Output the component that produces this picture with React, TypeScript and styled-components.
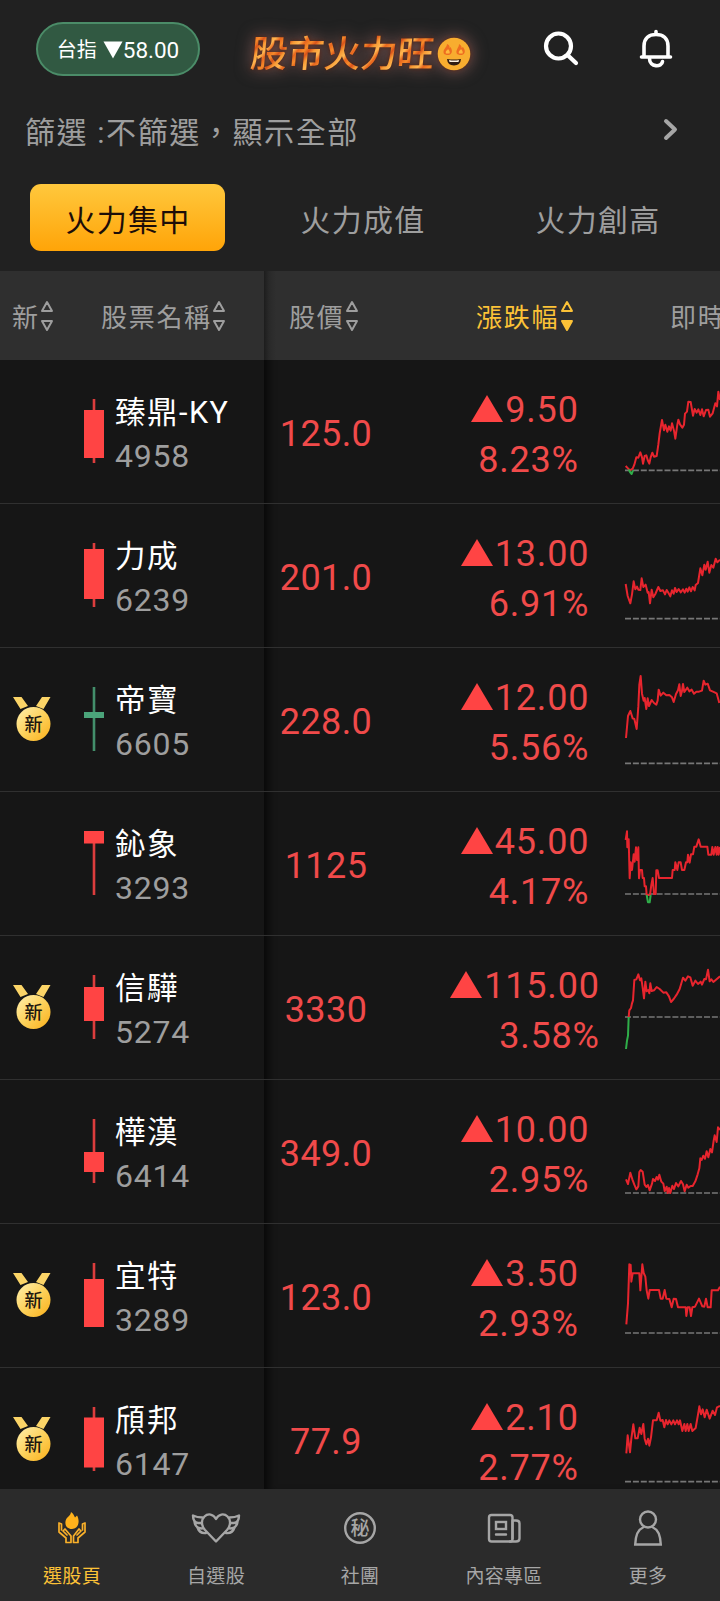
import React from "react";
import styled, { createGlobalStyle } from "styled-components";

const GlobalStyle = createGlobalStyle`
  * { box-sizing: border-box; }
  body {
    margin: 0;
    background: #161616;
    font-family: Roboto, "Noto Sans CJK TC", sans-serif;
  }
`;

const RED = "#ff4444";
const GREEN = "#4ba47a";

const Page = styled.div`
  width: 720px;
  height: 1601px;
  overflow: hidden;
  display: flex;
  flex-direction: column;
  background: #161616;
`;

const Header = styled.header`
  flex: none;
  height: 271px;
  background: #212121;
`;

const TopBar = styled.div`
  display: flex;
  align-items: center;
  height: 98px;
  padding: 0 46px 0 36px;
`;

const IndexPill = styled.button`
  display: flex;
  align-items: center;
  justify-content: center;
  width: 164px;
  height: 54px;
  padding: 2px 0 0;
  border: 2px solid #4b8c68;
  border-radius: 27px;
  background: #315942;
  color: #fff;
  font: 22.5px/1 Roboto, "Noto Sans CJK TC", sans-serif;
`;

const PillLabel = styled.span`
  font-size: 20px;
  margin-right: 6px;
`;

const Brand = styled.div`
  display: flex;
  align-items: center;
  margin-left: 46px;
  padding: 4px 0 0 2px;
  filter: drop-shadow(0 0 2px rgba(90, 30, 10, 0.8)) drop-shadow(0 0 8px rgba(190, 125, 120, 0.65));
`;

const BrandText = styled.span`
  display: block;
  padding: 0 3px;
  font: 500 37px/46px "Noto Sans CJK TC", sans-serif;
  letter-spacing: -0.4px;
  background: repeating-linear-gradient(128deg, #f79a35 0, #ffb650 5px, #e8661e 9px, #f58a2a 14px, #d9531a 18px, #f79a35 22px);
  -webkit-background-clip: text;
  background-clip: text;
  color: transparent;
  transform: skewX(-5deg);
`;

const BrandFace = styled.svg`
  width: 34px;
  height: 34px;
  margin-top: 5px;
`;

const TopIcons = styled.div`
  display: flex;
  align-items: center;
  gap: 59px;
  margin-left: auto;
`;

const FilterRow = styled.div`
  display: flex;
  align-items: center;
  justify-content: space-between;
  height: 69px;
  padding: 0 42px 5px 25px;
  color: #9e9e9e;
  font-size: 30px;
  letter-spacing: 1.6px;
`;

const Tabs = styled.nav`
  display: flex;
  gap: 40px;
  padding: 17px 0 0 30px;
`;

const Tab = styled.button<{ $active?: boolean }>`
  width: 195px;
  height: 67px;
  padding: 6px 0 0 1px;
  border: 0;
  border-radius: 11px;
  background: ${(p) => (p.$active ? "linear-gradient(#ffc83d, #ffa408)" : "transparent")};
  color: ${(p) => (p.$active ? "#1c0d08" : "#9e9e9e")};
  font: 30px/1 Roboto, "Noto Sans CJK TC", sans-serif;
  letter-spacing: 1.3px;
`;

const Table = styled.main`
  flex: 1;
  display: flex;
  min-height: 0;
  overflow: hidden;
`;

const FrozenPane = styled.section`
  flex: none;
  width: 264px;
`;

const ScrollPane = styled.section`
  flex: none;
  width: 456px;
  box-shadow: inset 9px 0 8px -5px rgba(0, 0, 0, 0.65);
`;

const HeadRow = styled.div`
  display: flex;
  align-items: center;
  height: 89px;
  background: #2f2f2f;
  color: #9e9e9e;
`;

const ScrollHead = styled(HeadRow)`
  background: linear-gradient(90deg, #1d1d1d 0, #292929 5px, #2f2f2f 12px);
`;

const HeadCell = styled.div<{ $width: number; $indent: number; $active?: boolean }>`
  flex: none;
  display: flex;
  align-items: center;
  width: ${(p) => p.$width}px;
  padding-left: ${(p) => p.$indent}px;
  overflow: hidden;
  color: ${(p) => (p.$active ? "#fcc237" : "inherit")};
  font-size: 26px;
  letter-spacing: 1.7px;
  white-space: nowrap;
`;

const SortIcon = styled.svg`
  flex: none;
  width: 14px;
  height: 32px;
  margin-left: 0.5px;
`;

const Row = styled.div`
  display: flex;
  height: 144px;
  border-bottom: 1.5px solid #303030;
`;

const BadgeCell = styled.div`
  width: 84px;
  padding: 48px 0 0 12px;
`;

const Candle = styled.svg`
  width: 20px;
  height: 143px;
`;

const NameCell = styled.div`
  padding: 31px 0 0 11px;
`;

const StockName = styled.div`
  color: #fff;
  font-size: 30.5px;
  line-height: 44px;
  letter-spacing: 1.5px;
  white-space: nowrap;
`;

const StockCode = styled.div`
  color: #9e9e9e;
  font-size: 32px;
  line-height: 42px;
  letter-spacing: 0.8px;
`;

const PriceCell = styled.div`
  display: flex;
  align-items: center;
  justify-content: center;
  width: 124px;
  padding-top: 5px;
  color: #f04a4a;
  font-size: 36px;
  letter-spacing: 0.4px;
`;

const ChangeCell = styled.div`
  display: flex;
  justify-content: center;
  width: 274px;
  padding-top: 26px;
`;

const ChangeBlock = styled.div`
  color: #f04a4a;
  font-size: 36px;
  line-height: 49.5px;
  letter-spacing: 0.8px;
  text-align: right;
`;

const ChangeLine = styled.div`
  display: flex;
  justify-content: flex-end;
`;

const RiseMark = styled.svg`
  width: 32px;
  height: 27px;
  margin: 9px 2px 0 0;
`;

const Chart = styled.svg`
  flex: none;
  width: 120px;
  height: 144px;
  margin-left: -62px;
`;

const BottomNav = styled.nav`
  flex: none;
  display: flex;
  height: 112px;
  background: #2b2b2b;
`;

const NavItem = styled.a<{ $active?: boolean }>`
  flex: 1;
  display: flex;
  flex-direction: column;
  align-items: center;
  padding-top: 17px;
  color: ${(p) => (p.$active ? "#fcc237" : "#a6a6a6")};
  font-size: 19px;
  line-height: 28px;
  letter-spacing: 0.3px;
`;

const NavIcon = styled.svg`
  width: 52px;
  height: 44px;
  margin-bottom: 13px;
  fill: none;
  stroke: currentColor;
  stroke-width: 2.4;
  stroke-linejoin: round;
  stroke-linecap: round;
`;

interface Stock {
  name: string;
  code: string;
  isNew?: boolean;
  price: string;
  change: string;
  percent: string;
  candle: { top: number; bottom: number; falling?: boolean };
  chart: { top: number; base: number; line: string; below?: string };
}

const stocks: Stock[] = [
  {
    name: "臻鼎-KY", code: "4958", price: "125.0", change: "9.50", percent: "8.23%",
    candle: { top: 50, bottom: 98 },
    chart: {
      top: 0, base: 331,
      line: "77,318 84,325 90,331 98,326 103,314 109,292 115,293 121,277 126,292 129,311 134,288 139,286 143,300 148,311 152,292 157,278 162,290 170,288 175,254 179,220 186,180 192,211 196,194 202,215 207,199 212,212 216,190 222,212 226,236 232,194 235,179 240,193 247,203 252,194 255,161 261,155 265,125 272,126 279,167 284,147 290,158 295,148 301,165 306,148 311,169 318,150 325,149 330,170 338,160 346,130 351,139 355,95 360,120",
      below: "86,328 90,336 95,342 99,331",
    },
  },
  {
    name: "力成", code: "6239", price: "201.0", change: "13.00", percent: "6.91%",
    candle: { top: 45, bottom: 95 },
    chart: {
      top: 432, base: 776,
      line: "77,672 83,708 91,730 96,703 101,664 106,688 111,680 115,689 121,690 125,655 130,681 137,674 143,698 146,696 150,730 155,689 160,712 166,702 175,681 181,693 189,691 195,703 200,690 206,700 211,709 216,691 221,701 225,684 230,696 236,687 242,697 249,688 254,698 259,686 263,695 268,682 273,694 278,681 284,691 287,675 294,669 301,625 307,646 313,614 317,629 323,605 328,638 334,615 340,623 347,596 352,607 360,599",
    },
  },
  {
    name: "帝寶", code: "6605", isNew: true, price: "228.0", change: "12.00", percent: "5.56%",
    candle: { top: 64, bottom: 70, falling: true },
    chart: {
      top: -6, base: 340,
      line: "78,264 84,198 91,183 98,205 103,207 110,237 115,170 118,104 122,78 126,131 131,152 134,144 139,177 143,145 147,168 155,150 162,159 169,164 173,151 176,119 182,137 190,128 199,136 208,135 216,142 221,156 228,132 234,121 238,103 242,138 246,123 249,102 253,126 262,113 268,124 275,119 282,131 289,125 297,125 306,122 311,92 316,104 323,101 330,121 339,125 350,130 358,159",
    },
  },
  {
    name: "鈊象", code: "3293", price: "1125", change: "45.00", percent: "4.17%",
    candle: { top: 39, bottom: 51.5 },
    chart: {
      top: 426, base: 732,
      line: "77,570 81,544 82,592 86,568 89,685 92,637 96,660 101,613 104,635 108,592 111,630 115,592 117,685 120,660 126,660 128,684 132,684 134,709 138,709 140,735 150,735 154,705 158,684 162,732 167,732 169,661 173,661 177,684 216,684 218,660 224,660 226,637 232,660 236,637 242,637 246,660 253,660 258,637 262,637 264,614 269,638 273,613 279,613 283,590 289,590 296,568 302,590 322,590 325,614 334,614 337,591 341,614 346,591 350,614 353,591 356,614 360,591",
      below: "140,735 144,757 149,757 152,735",
    },
  },
  {
    name: "信驊", code: "5274", isNew: true, price: "3330", change: "115.00", percent: "3.58%",
    candle: { top: 51, bottom: 85 },
    chart: {
      top: -12, base: 231,
      line: "86,231 88,211 93,204 96,190 99,181 103,120 109,118 115,103 120,121 124,115 128,143 132,175 136,125 140,154 145,150 148,160 151,130 155,153 162,151 170,141 179,147 190,158 199,157 207,169 213,186 221,177 230,164 239,147 249,113 256,122 264,109 271,112 278,137 286,122 294,132 302,125 306,134 313,117 318,118 324,89 329,124 334,118 340,126 348,119 360,109",
      below: "78,327 81,302 84,287 86,231",
    },
  },
  {
    name: "樺漢", code: "6414", price: "349.0", change: "10.00", percent: "2.95%",
    candle: { top: 72, bottom: 92 },
    chart: {
      top: 420, base: 759,
      line: "78,718 84,732 91,698 97,718 103,734 109,748 115,739 118,696 122,690 128,695 134,734 139,741 144,735 149,751 156,731 159,717 165,723 170,711 174,719 178,704 184,725 190,731 194,753 200,740 203,759 207,744 211,759 217,737 222,747 228,729 235,739 243,723 249,733 254,754 260,734 265,743 272,738 278,738 286,724 293,703 298,685 301,655 305,660 310,647 315,656 320,634 325,652 331,627 336,637 341,602 344,586 350,606 354,562 360,570",
    },
  },
  {
    name: "宜特", code: "3289", isNew: true, price: "123.0", change: "3.50", percent: "2.93%",
    candle: { top: 55, bottom: 103 },
    chart: {
      top: 12, base: 339,
      line: "79,313 84,250 88,133 92,135 94,185 98,160 118,160 121,211 127,133 131,159 136,170 140,211 145,236 149,210 177,210 182,236 188,236 194,210 199,236 208,237 215,262 221,236 228,237 234,262 257,262 259,288 263,262 269,262 273,288 277,262 285,260 297,236 307,259 313,260 318,236 323,262 332,262 335,211 354,211 360,200",
    },
  },
  {
    name: "頎邦", code: "6147", isNew: true, price: "77.9", change: "2.10", percent: "2.77%",
    candle: { top: 49.5, bottom: 99.5 },
    chart: {
      top: 444, base: 785,
      line: "79,700 83,646 90,697 94,656 100,613 106,655 113,655 119,623 124,642 130,612 134,656 139,673 144,656 148,677 153,652 159,601 170,601 176,578 181,602 188,600 193,622 198,600 203,613 208,601 214,613 220,601 225,613 231,601 236,613 240,601 247,633 253,612 257,633 262,612 266,633 272,612 277,633 287,624 294,584 298,559 303,583 308,568 314,592 320,569 329,596 338,572 345,585 351,562 360,558",
    },
  },
];

function Sort({ active }: { active?: boolean }) {
  return (
    <SortIcon viewBox="0 0 14 32" fill="none" stroke="currentColor" strokeWidth="2" strokeLinejoin="round">
      <path d="M7 2 L12 11 H2 Z" />
      <path d="M7 30 L12 21 H2 Z" fill={active ? "currentColor" : "none"} />
    </SortIcon>
  );
}

function Medal() {
  return (
    <svg width="40" height="46" viewBox="0 0 40 46">
      <defs>
        <linearGradient id="medal" x1="0" y1="0" x2="1" y2="1">
          <stop offset="0" stopColor="#fff0b0" />
          <stop offset="0.5" stopColor="#fdd25c" />
          <stop offset="1" stopColor="#faaf19" />
        </linearGradient>
      </defs>
      <path d="M1 1 H9.500 L16 10 L8.500 13 Z M38.500 1 H30 L24 10 L31.500 13 Z" fill="#fbd467" />
      <circle cx="21.500" cy="28" r="17" fill="url(#medal)" />
      <text x="21.500" y="35" textAnchor="middle" fontSize="18" fontWeight="500" fill="#1d1710">新</text>
    </svg>
  );
}

function FlameEyes() {
  return (
    <BrandFace viewBox="0 0 34 34">
      <circle cx="17" cy="17" r="16.300" fill="#f8ad2f" />
      <path d="M7 17 C5 12 10 11 10 7 C13 8 12.500 10 12.500 11 L13.500 10 C16 14 15 17 12 18 H9.500 Z M20 17 C18 13 22 11 22 7 C25 9 24.500 10 24.500 11 L26 10 C29 14 28 17 25 18 H22.500 Z" fill="#ee6d20" />
      <path d="M9 16.500 C8 13.500 10.500 13.500 11 12 C13 14.500 13 15.500 12.500 16.500 Z M22 16.500 C21 13.500 23.500 13.500 24 12 C26 14.500 26 15.500 25.500 16.500 Z" fill="#ffb93c" />
      <path d="M10 22 Q17 23 24 22 Q23.500 28.500 17 28.500 Q10.500 28.500 10 22 Z" fill="#301c12" />
      <path d="M12 23 Q17 24 22 23 L21.500 25 H12.500 Z" fill="#fff2df" />
    </BrandFace>
  );
}

function SearchIcon() {
  return (
    <svg width="36" height="36" viewBox="0 0 36 36" fill="none" stroke="#fff" strokeWidth="4.200" strokeLinecap="round">
      <circle cx="15.500" cy="15" r="12.500" />
      <path d="M25 24.500 L33 32" />
    </svg>
  );
}

function BellIcon() {
  return (
    <svg width="36" height="40" viewBox="0 0 36 40" fill="none" stroke="#fff" strokeWidth="3.600" strokeLinecap="round" strokeLinejoin="round">
      <path d="M18 2.500 V5 M6 28 V17 C6 9 11 5.500 18 5.500 C25 5.500 30 9 30 17 V28 M3.500 28 H32.500" />
      <path d="M11.500 29.500 C11.500 38.500 24 38.500 24.500 32.500" />
    </svg>
  );
}

function CandleMark({ top, bottom, falling }: Stock["candle"]) {
  const color = falling ? GREEN : RED;
  return (
    <Candle viewBox="0 0 20 143">
      <rect x="8.700" y="39" width="2.600" height="64" fill={color} opacity="0.85" />
      <rect y={top} width="20" height={bottom - top} fill={color} />
    </Candle>
  );
}

function Sparkline({ top, base, line, below }: Stock["chart"]) {
  return (
    <Chart viewBox={`0 ${top} 360 432`} fill="none" strokeLinejoin="round">
      <path d={`M75 ${base} H360`} stroke="#777" strokeWidth="5" strokeDasharray="18 5.700" />
      <polyline points={line} stroke="#e8252e" strokeWidth="6" />
      {below && <polyline points={below} stroke="#2fae49" strokeWidth="6" />}
    </Chart>
  );
}

export default function App() {
  return (
    <Page>
      <GlobalStyle />
      <Header>
        <TopBar>
          <IndexPill>
            <PillLabel>台指</PillLabel>
            <svg width="20" height="18" viewBox="0 0 20 18"><path d="M0.500 0.500 H19.500 L10 17.500 Z" fill="#fff" /></svg>
            <span>58.00</span>
          </IndexPill>
          <Brand>
            <BrandText>股市火力旺</BrandText>
            <FlameEyes />
          </Brand>
          <TopIcons>
            <SearchIcon />
            <BellIcon />
          </TopIcons>
        </TopBar>
        <FilterRow>
          <span>篩選 :不篩選，顯示全部</span>
          <svg width="15" height="24" viewBox="0 0 15 24" fill="none" stroke="#a6a6a6" strokeWidth="4" strokeLinecap="round" strokeLinejoin="round">
            <path d="M3 3 L12 11.500 L3 20" />
          </svg>
        </FilterRow>
        <Tabs>
          <Tab $active>火力集中</Tab>
          <Tab>火力成值</Tab>
          <Tab>火力創高</Tab>
        </Tabs>
      </Header>
      <Table>
        <FrozenPane>
          <HeadRow>
            <HeadCell $width={101} $indent={12}>新<Sort /></HeadCell>
            <HeadCell $width={163} $indent={0}>股票名稱<Sort /></HeadCell>
          </HeadRow>
          {stocks.map((s) => (
            <Row key={s.code}>
              <BadgeCell>{s.isNew && <Medal />}</BadgeCell>
              <CandleMark {...s.candle} />
              <NameCell>
                <StockName>{s.name}</StockName>
                <StockCode>{s.code}</StockCode>
              </NameCell>
            </Row>
          ))}
        </FrozenPane>
        <ScrollPane>
          <ScrollHead>
            <HeadCell $width={124} $indent={25}>股價<Sort /></HeadCell>
            <HeadCell $width={282} $indent={88} $active>漲跌幅<Sort active /></HeadCell>
            <HeadCell $width={50} $indent={0}>即時走勢</HeadCell>
          </ScrollHead>
          {stocks.map((s) => (
            <Row key={s.code}>
              <PriceCell>{s.price}</PriceCell>
              <ChangeCell>
                <ChangeBlock>
                  <ChangeLine>
                    <RiseMark viewBox="0 0 32 27"><path d="M16 0 L32 27 H0 Z" fill={RED} /></RiseMark>
                    {s.change}
                  </ChangeLine>
                  <div>{s.percent}</div>
                </ChangeBlock>
              </ChangeCell>
              <Sparkline {...s.chart} />
            </Row>
          ))}
        </ScrollPane>
      </Table>
      <BottomNav>
        <NavItem $active>
          <NavIcon viewBox="0 0 52 44">
            <path d="M25 6 C28 8 28 10 29 11.500 L31 9.500 C34 14 33 23 26 23 C18 23 18 14 22 11 C23 10 25 8 25 6 Z" fill="#ffb21b" stroke="none" />
            <path d="M13 17 V26 L20 32 V36.500 H25 V30 L19 23 L17 25 L21 29 M13 17 L15.500 18 V24 M39 17 V26 L32 32 V36.500 H27.500 V30 L33 23 L35 25 L31 29 M39 17 L36.500 18 V24" stroke="#f9b02a" strokeWidth="1.700" />
          </NavIcon>
          選股頁
        </NavItem>
        <NavItem>
          <NavIcon viewBox="0 0 52 44">
            <path d="M26 35.500 L15 24 C11 19.500 11 14 14.500 10.500 C18 7 23.500 8 26 13 C28.500 8 34 7 37.500 10.500 C41 14 41 19.500 37 24 Z" />
            <path d="M12.500 11.500 C9 11.500 6 11 3 9.500 C3 14 4.500 16.500 8 17 H11 M4.500 15.500 C5 20 7.500 22.500 12 22.500 M7.500 21.500 C9 26 12 27.500 16 27 M39.500 11.500 C43 11.500 46 11 49 9.500 C49 14 47.500 16.500 44 17 H41 M47.500 15.500 C47 20 44.500 22.500 40 22.500 M44.500 21.500 C43 26 40 27.500 36 27" />
          </NavIcon>
          自選股
        </NavItem>
        <NavItem>
          <NavIcon viewBox="0 0 52 44">
            <circle cx="26" cy="22" r="14.800" />
            <text x="26" y="29" textAnchor="middle" fontSize="19" fontWeight="500" fill="currentColor" stroke="none" letterSpacing="0">秘</text>
          </NavIcon>
          社團
        </NavItem>
        <NavItem>
          <NavIcon viewBox="0 0 52 44">
            <rect x="11" y="9" width="23.500" height="26.500" rx="2.500" />
            <path d="M34.500 14.500 H38 Q41.500 14.500 41.500 17.500 V32.500 Q41.500 35.500 38 35.500 H32 M34.500 14.500 V32.500 M18 28.500 H28" />
            <rect x="18" y="16" width="10" height="7" strokeLinejoin="miter" />
          </NavIcon>
          內容專區
        </NavItem>
        <NavItem>
          <NavIcon viewBox="0 0 52 44">
            <circle cx="26" cy="13.500" r="8" />
            <path d="M21 21.500 C16 23.500 13.500 31 13.200 38.500 H38.800 C38.500 31 36 23.500 31 21.500" strokeLinejoin="miter" />
          </NavIcon>
          更多
        </NavItem>
      </BottomNav>
    </Page>
  );
}
